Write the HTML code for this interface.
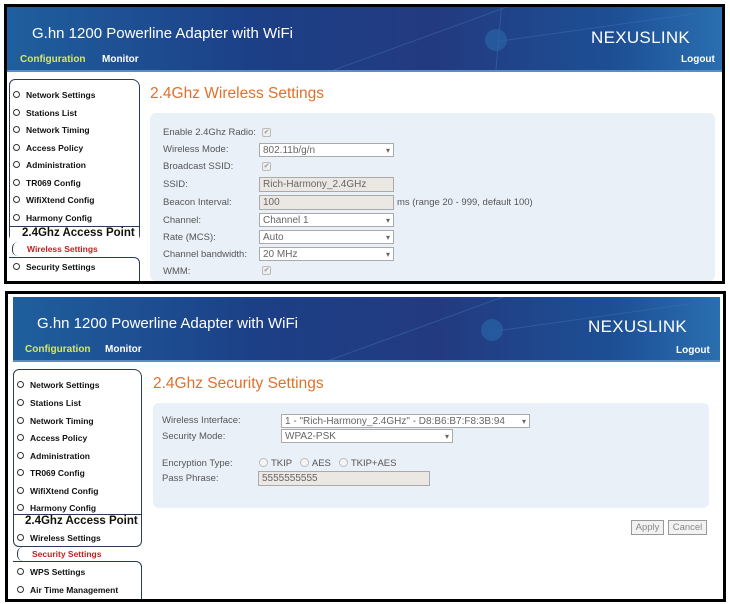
<!DOCTYPE html>
<html><head><meta charset="utf-8"><style>
*{margin:0;padding:0;box-sizing:border-box}
body{width:730px;height:604px;background:#fff;position:relative;overflow:hidden;font-family:"Liberation Sans",Arial,sans-serif}
.a{position:absolute;white-space:nowrap}
.frame{position:absolute;border:3px solid #000;background:#fff}
.hdr{position:absolute;background:linear-gradient(90deg,#1f5f9e 0%,#1c3f86 35%,#233a80 60%,#1d4f95 85%,#2a6fb0 100%);border-bottom:2px solid #5b8fc4;overflow:hidden}
.t{color:#fff;font-size:15px}
.nav{font-size:10px;font-weight:bold;color:#fff}
.cfg{color:#d6ea5a}
.logo{color:#fff;font-size:17px;letter-spacing:0.3px}
.side{position:absolute;border:1px solid #2a3a5a;border-radius:6px;background:#fff}
.it{font-size:8.5px;font-weight:bold;color:#111}
.it:before{content:"";display:inline-block;width:5px;height:5px;border:1px solid #333;border-radius:50%;margin-right:6px;vertical-align:0}
.ap{font-size:11.5px;font-weight:bold;color:#111}
.act{font-size:8.5px;font-weight:bold;color:#c02020}
.ttl{color:#e0702e;font-size:15.5px}
.box{position:absolute;background:#e9f0f8;border-radius:6px}
.lb{font-size:9.5px;color:#555}
.in{position:absolute;border:1px solid #aaa;background:#fff;font-size:10px;color:#666;padding-left:3px;line-height:13px}
.in.g{background:#ebe8e4}
.in.s:after{content:"▾";position:absolute;right:3px;top:0;font-size:8px;color:#666}
.cb{position:absolute;width:9px;height:9px;border:1px solid #bbb;border-radius:2px;background:#eee;font-size:7px;color:#999;line-height:8px;text-align:center}
.rd{display:inline-block;width:9px;height:9px;border:1px solid #bbb;border-radius:50%;background:#f4f4f4;vertical-align:-1px;margin-right:3px}
.btn{position:absolute;border:1px solid #999;background:#f2f2f2;font-size:9.5px;color:#888;text-align:center;line-height:13px}
.glow{position:absolute;border-radius:50%;background:#2a63a8;opacity:.7}
.ln{position:absolute;height:1px;background:#3f70b0;opacity:.5;transform-origin:0 0}
.sw{position:absolute;border:2px solid #fff;border-radius:50%;border-color:#fff transparent transparent transparent}
</style></head><body>

<!-- Panel 1 -->
<div class="frame" style="left:4px;top:4px;width:721px;height:280px"></div>
<div class="hdr" style="left:7px;top:7px;width:715px;height:65px">
 <div class="ln" style="left:320px;top:65px;width:200px;transform:rotate(-20deg)"></div>
 <div class="ln" style="left:490px;top:34px;width:200px;transform:rotate(-8deg)"></div>
 <div class="ln" style="left:495px;top:0px;width:80px;transform:rotate(95deg)"></div>
 <div class="glow" style="left:478px;top:22px;width:22px;height:22px"></div>
</div>
<div class="a t" style="left:32px;top:25px">G.hn 1200 Powerline Adapter with WiFi</div>
<div class="a nav cfg" style="left:20px;top:54px">Configuration</div>
<div class="a nav" style="left:102px;top:54px">Monitor</div>
<div class="a logo" style="left:591px;top:28px">NEXUSLINK</div>
<div class="a nav" style="left:681px;top:54px">Logout</div>

<div class="side" style="left:9px;top:79px;width:131px;height:162px;border-top-right-radius:8px"></div>
<div class="side" style="left:9px;top:257px;width:131px;height:24px;border-bottom:none;border-radius:0 6px 0 0;border-left:none"></div>
<div class="a it" style="left:13px;top:90px">Network Settings</div>
<div class="a it" style="left:13px;top:108px">Stations List</div>
<div class="a it" style="left:13px;top:125px">Network Timing</div>
<div class="a it" style="left:13px;top:143px">Access Policy</div>
<div class="a it" style="left:13px;top:160px">Administration</div>
<div class="a it" style="left:13px;top:178px">TR069 Config</div>
<div class="a it" style="left:13px;top:195px">WifiXtend Config</div>
<div class="a it" style="left:13px;top:213px">Harmony Config</div>
<div class="a" style="left:10px;top:226px;width:129px;height:15px;background:#fff;border-top:1px solid #2a3a5a"></div>
<div class="a ap" style="left:22px;top:227px">2.4Ghz Access Point</div>
<div class="a" style="left:12px;top:242px;width:130px;height:14px;border-left:1px solid #2a3a5a;border-radius:6px 0 0 6px"></div>
<div class="a act" style="left:27px;top:244px">Wireless Settings</div>
<div class="a it" style="left:13px;top:262px">Security Settings</div>

<div class="a ttl" style="left:150px;top:85px">2.4Ghz Wireless Settings</div>
<div class="box" style="left:150px;top:113px;width:565px;height:168px"></div>
<div class="a lb" style="left:163px;top:127px">Enable 2.4Ghz Radio:</div><div class="cb" style="left:262px;top:128px">✔</div>
<div class="a lb" style="left:163px;top:144px">Wireless Mode:</div><div class="in s" style="left:259px;top:143px;width:135px;height:14px">802.11b/g/n</div>
<div class="a lb" style="left:163px;top:161px">Broadcast SSID:</div><div class="cb" style="left:262px;top:162px">✔</div>
<div class="a lb" style="left:163px;top:179px">SSID:</div><div class="in g" style="left:259px;top:177px;width:135px;height:15px">Rich-Harmony_2.4GHz</div>
<div class="a lb" style="left:163px;top:197px">Beacon Interval:</div><div class="in g" style="left:259px;top:195px;width:135px;height:15px">100</div>
<div class="a lb" style="left:397px;top:197px">ms (range 20 - 999, default 100)</div>
<div class="a lb" style="left:163px;top:215px">Channel:</div><div class="in s" style="left:259px;top:213px;width:135px;height:14px">Channel 1</div>
<div class="a lb" style="left:163px;top:232px">Rate (MCS):</div><div class="in s" style="left:259px;top:230px;width:135px;height:14px">Auto</div>
<div class="a lb" style="left:163px;top:249px">Channel bandwidth:</div><div class="in s" style="left:259px;top:247px;width:135px;height:14px">20 MHz</div>
<div class="a lb" style="left:163px;top:266px">WMM:</div><div class="cb" style="left:262px;top:266px">✔</div>

<!-- Panel 2 -->
<div class="frame" style="left:5px;top:291px;width:721px;height:311px"></div>
<div class="hdr" style="left:13px;top:297px;width:707px;height:65px">
 <div class="ln" style="left:310px;top:65px;width:200px;transform:rotate(-20deg)"></div>
 <div class="ln" style="left:480px;top:34px;width:200px;transform:rotate(-8deg)"></div>
 <div class="glow" style="left:468px;top:22px;width:22px;height:22px"></div>
</div>
<div class="a t" style="left:37px;top:315px">G.hn 1200 Powerline Adapter with WiFi</div>
<div class="a nav cfg" style="left:25px;top:344px">Configuration</div>
<div class="a nav" style="left:105px;top:344px">Monitor</div>
<div class="a logo" style="left:588px;top:317px">NEXUSLINK</div>
<div class="a nav" style="left:676px;top:345px">Logout</div>

<div class="side" style="left:13px;top:369px;width:129px;height:178px;border-top-right-radius:8px"></div>
<div class="side" style="left:13px;top:561px;width:129px;height:38px;border-bottom:none;border-left:none;border-radius:0 6px 0 0"></div>
<div class="a it" style="left:17px;top:380px">Network Settings</div>
<div class="a it" style="left:17px;top:398px">Stations List</div>
<div class="a it" style="left:17px;top:416px">Network Timing</div>
<div class="a it" style="left:17px;top:433px">Access Policy</div>
<div class="a it" style="left:17px;top:451px">Administration</div>
<div class="a it" style="left:17px;top:468px">TR069 Config</div>
<div class="a it" style="left:17px;top:486px">WifiXtend Config</div>
<div class="a it" style="left:17px;top:503px">Harmony Config</div>
<div class="a" style="left:14px;top:514px;width:127px;height:15px;background:#fff;border-top:1px solid #2a3a5a"></div>
<div class="a ap" style="left:25px;top:515px">2.4Ghz Access Point</div>
<div class="a it" style="left:17px;top:533px">Wireless Settings</div>
<div class="a" style="left:17px;top:547px;width:125px;height:14px;border-left:1px solid #2a3a5a;border-radius:6px 0 0 6px"></div>
<div class="a act" style="left:32px;top:549px">Security Settings</div>
<div class="a it" style="left:17px;top:567px">WPS Settings</div>
<div class="a it" style="left:17px;top:585px">Air Time Management</div>

<div class="a ttl" style="left:153px;top:375px">2.4Ghz Security Settings</div>
<div class="box" style="left:153px;top:403px;width:556px;height:105px"></div>
<div class="a lb" style="left:162px;top:415px">Wireless Interface:</div><div class="in s" style="left:281px;top:414px;width:249px;height:14px">1 - "Rich-Harmony_2.4GHz" - D8:B6:B7:F8:3B:94</div>
<div class="a lb" style="left:162px;top:431px">Security Mode:</div><div class="in s" style="left:281px;top:429px;width:172px;height:14px">WPA2-PSK</div>
<div class="a lb" style="left:162px;top:458px">Encryption Type:</div>
<div class="a lb" style="left:259px;top:458px"><span class="rd"></span>TKIP &nbsp; <span class="rd"></span>AES &nbsp; <span class="rd"></span>TKIP+AES</div>
<div class="a lb" style="left:162px;top:473px">Pass Phrase:</div><div class="in g" style="left:258px;top:471px;width:172px;height:15px">5555555555</div>

<div class="btn" style="left:631px;top:520px;width:33px;height:15px">Apply</div>
<div class="btn" style="left:668px;top:520px;width:39px;height:15px">Cancel</div>
</body></html>
